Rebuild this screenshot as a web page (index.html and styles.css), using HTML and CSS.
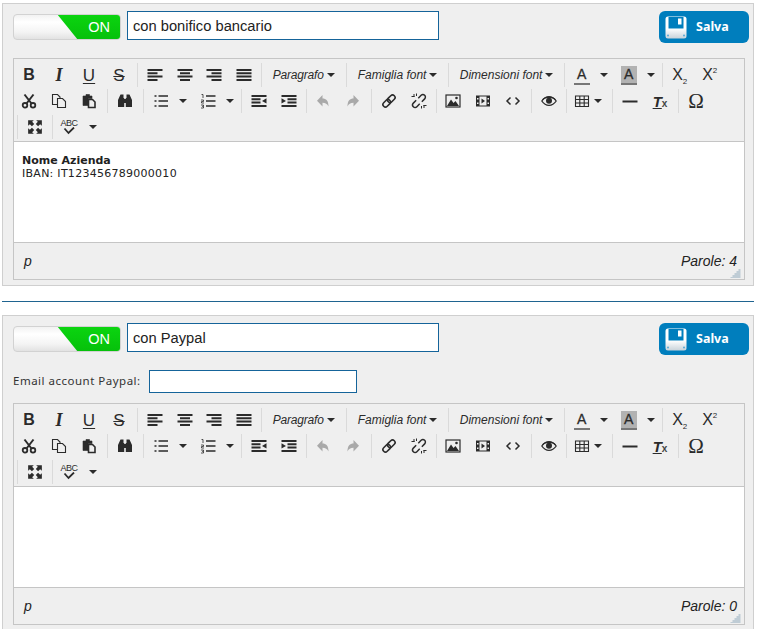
FILE: index.html
```html
<!DOCTYPE html>
<html lang="it">
<head>
<meta charset="utf-8">
<title>Metodi di pagamento</title>
<link rel="stylesheet" href="styles.css">
</head>
<body>
<svg class="defs" aria-hidden="true">
  <defs>
    <linearGradient id="diskfill" x1="0" y1="0" x2="0" y2="1"><stop offset="0" stop-color="#ffffff"/><stop offset=".55" stop-color="#ffffff"/><stop offset="1" stop-color="#c9d3da"/></linearGradient>
    <symbol id="i-left" viewBox="0 0 16 16"><path d="M0.500 3h15M0.500 6.300h10M0.500 9.600h15M0.500 12.900h10" fill="none" stroke="currentColor" stroke-width="2"/></symbol>
    <symbol id="i-center" viewBox="0 0 16 16"><path d="M0.500 3h15M3 6.300h10M0.500 9.600h15M3 12.900h10" fill="none" stroke="currentColor" stroke-width="2"/></symbol>
    <symbol id="i-right" viewBox="0 0 16 16"><path d="M0.500 3h15M5.500 6.300h10M0.500 9.600h15M5.500 12.900h10" fill="none" stroke="currentColor" stroke-width="2"/></symbol>
    <symbol id="i-just" viewBox="0 0 16 16"><path d="M0.500 3h15M0.500 6.300h15M0.500 9.600h15M0.500 12.900h15" fill="none" stroke="currentColor" stroke-width="2"/></symbol>
    <symbol id="i-cut" viewBox="0 0 16 16"><path d="M3.500 1.500L10.500 10.500M12.500 1.500L5.500 10.500" fill="none" stroke="currentColor" stroke-width="2"/><circle cx="4" cy="12.300" r="2.300" fill="none" stroke="currentColor" stroke-width="1.800"/><circle cx="12" cy="12.300" r="2.300" fill="none" stroke="currentColor" stroke-width="1.800"/></symbol>
    <symbol id="i-copy" viewBox="0 0 16 16"><path d="M6 11.500H1.500V1.500H6.500L9 4V6" fill="none" stroke="currentColor" stroke-width="1.100"/><path d="M6.500 5.500H11.500L14.500 8.500V14.500H6.500Z" fill="none" stroke="currentColor" stroke-width="1.100"/></symbol>
    <symbol id="i-paste" viewBox="0 0 16 16"><path d="M5 1.500H8.500V3H11V5.500H7V12.500H2V3H5Z" fill="currentColor" stroke="currentColor" stroke-width=".6"/><path d="M7.500 6.500H11.500L14 9V14.500H7.500Z" fill="#efefef" stroke="currentColor" stroke-width="1.600"/></symbol>
    <symbol id="i-find" viewBox="0 0 16 16"><path d="M3.500 1.500H6.500V5H7.200V14H1V7Z M9.500 1.500H12.500L15 7V14H8.800V5H9.500Z M7.200 6H8.800V10H7.200Z" fill="currentColor"/></symbol>
    <symbol id="i-ul" viewBox="0 0 16 16"><path d="M5.500 3h9.500M5.500 8h9.500M5.500 13h9.500" fill="none" stroke="currentColor" stroke-width="1.600"/><path d="M1.500 2.200h2v1.600h-2zM1.500 7.200h2v1.600h-2zM1.500 12.200h2v1.600h-2z" fill="currentColor"/></symbol>
    <symbol id="i-ol" viewBox="0 0 16 16"><path d="M6 3h9.500M6 8h9.500M6 13h9.500" fill="none" stroke="currentColor" stroke-width="1.600"/><path d="M1.500 1.500h1.500v3.500M1 7h2.500v1.500h-2v1.500h2.500M1 12h2.500v1.300H2M3.500 13.300V15H1" fill="none" stroke="currentColor" stroke-width=".8"/></symbol>
    <symbol id="i-outdent" viewBox="0 0 16 16"><path d="M0.500 3h15M0.500 6.300h9M0.500 9.600h9M0.500 12.900h15" fill="none" stroke="currentColor" stroke-width="2"/><path d="M15.500 5.300V10.600L11 8Z" fill="currentColor"/></symbol>
    <symbol id="i-indent" viewBox="0 0 16 16"><path d="M0.500 3h15M6.500 6.300h9M6.500 9.600h9M0.500 12.900h15" fill="none" stroke="currentColor" stroke-width="2"/><path d="M0.500 5.300V10.600L5 8Z" fill="currentColor"/></symbol>
    <symbol id="i-undo" viewBox="0 0 16 16"><path d="M7.500 2V5.500C11 5.500 13.500 7.500 13.500 13.500C12.300 11 10.500 9.800 7.500 9.800V13.500L2 7.800Z" fill="currentColor"/></symbol>
    <symbol id="i-redo" viewBox="0 0 16 16"><path d="M8.500 2V5.500C5 5.500 2.500 7.500 2.500 13.500C3.700 11 5.500 9.800 8.500 9.800V13.500L14 7.800Z" fill="currentColor"/></symbol>
    <symbol id="i-link" viewBox="0 0 16 16"><g fill="none" stroke="currentColor" stroke-width="1.600" transform="rotate(-45 8 8)"><rect x="0.500" y="5.500" width="8.500" height="5" rx="2.500"/><rect x="7" y="5.500" width="8.500" height="5" rx="2.500"/></g></symbol>
    <symbol id="i-unlink" viewBox="0 0 16 16"><g fill="none" stroke="currentColor" stroke-width="1.500" transform="rotate(-45 8 8)"><path d="M6.500 5.500H2.500A2.500 2.500 0 0 0 2.500 10.500H6.500"/><path d="M9.500 5.500H13.500A2.500 2.500 0 0 1 13.500 10.500H9.500"/></g><path d="M3 1V4M0.500 3.500H3.500M5.500 0.500V3M13 15V12M15.500 12.500H12.500M10.500 15.500V13" fill="none" stroke="currentColor" stroke-width="1"/></symbol>
    <symbol id="i-image" viewBox="0 0 16 16"><rect x="1" y="2" width="14" height="12" fill="none" stroke="currentColor" stroke-width="1.200"/><path d="M2 13L6 6.500L8.500 10L10.500 8L14 13Z" fill="currentColor"/><circle cx="11.500" cy="5" r="1.300" fill="currentColor"/></symbol>
    <symbol id="i-media" viewBox="0 0 16 16"><path d="M1 2.500H15V13.500H1Z" fill="currentColor"/><path d="M4.500 3.500H11.500V12.500H4.500Z" fill="#efefef"/><path d="M6.500 5.500L10 8L6.500 10.500Z" fill="currentColor"/><path d="M2 5h1.500v1.500H2zM2 9.500h1.500v1.500H2zM12.500 5h1.500v1.500h-1.500zM12.500 9.500h1.500v1.500h-1.500z" fill="#efefef"/></symbol>
    <symbol id="i-code" viewBox="0 0 16 16"><path d="M5.500 4.500L2 8L5.500 11.500M10.500 4.500L14 8L10.500 11.500" fill="none" stroke="currentColor" stroke-width="1.500"/></symbol>
    <symbol id="i-eye" viewBox="0 0 16 16"><path d="M0.800 8C3 4.800 5.500 3.600 8 3.600S13 4.800 15.200 8C13 11.200 10.500 12.400 8 12.400S3 11.200 0.800 8Z" fill="none" stroke="currentColor" stroke-width="1.300"/><circle cx="8" cy="7.800" r="3" fill="currentColor"/><path d="M1.500 7C4 3.500 12 3.500 14.500 7" fill="none" stroke="currentColor" stroke-width="1.200"/></symbol>
    <symbol id="i-table" viewBox="0 0 16 16"><path d="M1.500 3H14.500V13.500H1.500ZM1.500 6.500H14.500M1.500 10H14.500M5.800 3V13.500M10.200 3V13.500" fill="none" stroke="currentColor" stroke-width="1.100"/></symbol>
    <symbol id="i-hr" viewBox="0 0 16 16"><path d="M0.500 8.500H15.500" fill="none" stroke="currentColor" stroke-width="2"/></symbol>
    <symbol id="i-full" viewBox="1 1 14 14"><path d="M2 2H7L5.500 3.500L7.300 5.300L5.300 7.300L3.500 5.500L2 7ZM14 2V7L12.500 5.500L10.700 7.300L8.700 5.300L10.500 3.500L9 2ZM2 14V9L3.500 10.500L5.300 8.700L7.300 10.700L5.500 12.500L7 14ZM14 14H9L10.500 12.500L8.700 10.700L10.700 8.700L12.500 10.500L14 9Z" fill="currentColor"/></symbol>
    <symbol id="i-check" viewBox="0 0 16 8"><path d="M3.500 1.500L7.500 6L13 0.500" fill="none" stroke="currentColor" stroke-width="1.800"/></symbol>
    <symbol id="i-disk" viewBox="0 0 22 23"><rect x="0.500" y="0.500" width="21" height="22" rx="2.500" fill="url(#diskfill)"/><path d="M3.500 1H18.500V12.500H3.500Z" fill="#007ebd"/><rect x="13" y="2.500" width="3.500" height="6" fill="#ffffff"/><circle cx="3" cy="19.500" r="1" fill="#5aa9d6"/><circle cx="19" cy="19.500" r="1" fill="#5aa9d6"/></symbol>
    <symbol id="i-grip" viewBox="0 0 11 9"><path d="M8.500 1h2M6.500 3h4M4.500 5h6M2.500 7h8M0.500 9h10" fill="none" stroke="#8fa9bb" stroke-width="1"/></symbol>
  </defs>
</svg>

<section class="panel">
  <div class="head">
    <div class="switch"><span class="switch-on">ON</span></div>
    <input class="field field-title" type="text" value="con bonifico bancario">
    <button class="save" type="button"><svg class="disk"><use href="#i-disk"/></svg><span>Salva</span></button>
  </div>
  <div class="editor">
    <div class="toolbar">
      <div class="row">
        <span class="b glyph g-b">B</span><span class="b glyph g-i">I</span><span class="b glyph g-u">U</span><span class="b glyph g-s">S</span>
        <i class="sep"></i>
        <span class="b b-a"><svg class="ic"><use href="#i-left"/></svg></span><span class="b b-a"><svg class="ic"><use href="#i-center"/></svg></span><span class="b b-a"><svg class="ic"><use href="#i-right"/></svg></span><span class="b b-a"><svg class="ic"><use href="#i-just"/></svg></span>
        <i class="sep sep-tight"></i>
        <span class="menu m-para">Paragrafo<i class="caret"></i></span>
        <i class="sep"></i>
        <span class="menu m-fam">Famiglia font<i class="caret"></i></span>
        <i class="sep"></i>
        <span class="menu m-dim">Dimensioni font<i class="caret"></i></span>
        <i class="sep"></i>
        <span class="b"><span class="colour">A</span></span><span class="cb"><i class="caret"></i></span>
        <span class="b b-gap"><span class="colour colour-bg">A</span></span><span class="cb"><i class="caret"></i></span>
        <i class="sep"></i>
        <span class="b g-script"><span>X<sub>2</sub></span></span><span class="b g-script"><span>X<sup>2</sup></span></span>
      </div>
      <div class="row">
        <span class="b"><svg class="ic"><use href="#i-cut"/></svg></span><span class="b"><svg class="ic"><use href="#i-copy"/></svg></span><span class="b"><svg class="ic"><use href="#i-paste"/></svg></span>
        <i class="sep"></i>
        <span class="b"><svg class="ic"><use href="#i-find"/></svg></span>
        <i class="sep"></i>
        <span class="b"><svg class="ic"><use href="#i-ul"/></svg></span><span class="cb cb-list"><i class="caret"></i></span>
        <span class="b b-gap3"><svg class="ic"><use href="#i-ol"/></svg></span><span class="cb cb-list"><i class="caret"></i></span>
        <i class="sep sep-wide"></i>
        <span class="b"><svg class="ic"><use href="#i-outdent"/></svg></span><span class="b"><svg class="ic"><use href="#i-indent"/></svg></span>
        <i class="sep sep-snug"></i>
        <span class="b off"><svg class="ic"><use href="#i-undo"/></svg></span><span class="b off"><svg class="ic"><use href="#i-redo"/></svg></span>
        <i class="sep"></i>
        <span class="b"><svg class="ic"><use href="#i-link"/></svg></span><span class="b"><svg class="ic"><use href="#i-unlink"/></svg></span>
        <i class="sep sep-snug"></i>
        <span class="b"><svg class="ic"><use href="#i-image"/></svg></span><span class="b"><svg class="ic"><use href="#i-media"/></svg></span><span class="b"><svg class="ic"><use href="#i-code"/></svg></span>
        <i class="sep"></i>
        <span class="b"><svg class="ic"><use href="#i-eye"/></svg></span>
        <i class="sep sep-snug"></i>
        <span class="b b-table"><svg class="ic"><use href="#i-table"/></svg><i class="caret"></i></span>
        <i class="sep"></i>
        <span class="b"><svg class="ic"><use href="#i-hr"/></svg></span><span class="b glyph g-tx"><span class="tx-t">T</span><span class="tx-x">x</span></span>
        <i class="sep"></i>
        <span class="b glyph g-omega">Ω</span>
      </div>
      <div class="row row-last">
        <i class="sep sep-first"></i>
        <span class="b"><svg class="ic"><use href="#i-full"/></svg></span>
        <i class="sep sep-snug"></i>
        <span class="b spell"><span class="spell-abc">ABC</span><svg class="spell-check"><use href="#i-check"/></svg></span><span class="cb cb-spell"><i class="caret"></i></span>
      </div>
    </div>
    <div class="content">
      <p class="content-name">Nome Azienda</p>
      <p class="content-iban">IBAN: IT123456789000010</p>
    </div>
    <div class="status"><span class="path">p</span><span class="count">Parole: 4</span><svg class="grip"><use href="#i-grip"/></svg></div>
  </div>
</section>

<hr class="divider">

<section class="panel">
  <div class="head">
    <div class="switch"><span class="switch-on">ON</span></div>
    <input class="field field-title" type="text" value="con Paypal">
    <button class="save" type="button"><svg class="disk"><use href="#i-disk"/></svg><span>Salva</span></button>
  </div>
  <div class="email-row">
    <label class="email-label" for="paypal">Email account Paypal:</label>
    <input class="field field-email" id="paypal" type="text">
  </div>
  <div class="editor">
    <div class="toolbar">
      <div class="row">
        <span class="b glyph g-b">B</span><span class="b glyph g-i">I</span><span class="b glyph g-u">U</span><span class="b glyph g-s">S</span>
        <i class="sep"></i>
        <span class="b b-a"><svg class="ic"><use href="#i-left"/></svg></span><span class="b b-a"><svg class="ic"><use href="#i-center"/></svg></span><span class="b b-a"><svg class="ic"><use href="#i-right"/></svg></span><span class="b b-a"><svg class="ic"><use href="#i-just"/></svg></span>
        <i class="sep sep-tight"></i>
        <span class="menu m-para">Paragrafo<i class="caret"></i></span>
        <i class="sep"></i>
        <span class="menu m-fam">Famiglia font<i class="caret"></i></span>
        <i class="sep"></i>
        <span class="menu m-dim">Dimensioni font<i class="caret"></i></span>
        <i class="sep"></i>
        <span class="b"><span class="colour">A</span></span><span class="cb"><i class="caret"></i></span>
        <span class="b b-gap"><span class="colour colour-bg">A</span></span><span class="cb"><i class="caret"></i></span>
        <i class="sep"></i>
        <span class="b g-script"><span>X<sub>2</sub></span></span><span class="b g-script"><span>X<sup>2</sup></span></span>
      </div>
      <div class="row">
        <span class="b"><svg class="ic"><use href="#i-cut"/></svg></span><span class="b"><svg class="ic"><use href="#i-copy"/></svg></span><span class="b"><svg class="ic"><use href="#i-paste"/></svg></span>
        <i class="sep"></i>
        <span class="b"><svg class="ic"><use href="#i-find"/></svg></span>
        <i class="sep"></i>
        <span class="b"><svg class="ic"><use href="#i-ul"/></svg></span><span class="cb cb-list"><i class="caret"></i></span>
        <span class="b b-gap3"><svg class="ic"><use href="#i-ol"/></svg></span><span class="cb cb-list"><i class="caret"></i></span>
        <i class="sep sep-wide"></i>
        <span class="b"><svg class="ic"><use href="#i-outdent"/></svg></span><span class="b"><svg class="ic"><use href="#i-indent"/></svg></span>
        <i class="sep sep-snug"></i>
        <span class="b off"><svg class="ic"><use href="#i-undo"/></svg></span><span class="b off"><svg class="ic"><use href="#i-redo"/></svg></span>
        <i class="sep"></i>
        <span class="b"><svg class="ic"><use href="#i-link"/></svg></span><span class="b"><svg class="ic"><use href="#i-unlink"/></svg></span>
        <i class="sep sep-snug"></i>
        <span class="b"><svg class="ic"><use href="#i-image"/></svg></span><span class="b"><svg class="ic"><use href="#i-media"/></svg></span><span class="b"><svg class="ic"><use href="#i-code"/></svg></span>
        <i class="sep"></i>
        <span class="b"><svg class="ic"><use href="#i-eye"/></svg></span>
        <i class="sep sep-snug"></i>
        <span class="b b-table"><svg class="ic"><use href="#i-table"/></svg><i class="caret"></i></span>
        <i class="sep"></i>
        <span class="b"><svg class="ic"><use href="#i-hr"/></svg></span><span class="b glyph g-tx"><span class="tx-t">T</span><span class="tx-x">x</span></span>
        <i class="sep"></i>
        <span class="b glyph g-omega">Ω</span>
      </div>
      <div class="row row-last">
        <i class="sep sep-first"></i>
        <span class="b"><svg class="ic"><use href="#i-full"/></svg></span>
        <i class="sep sep-snug"></i>
        <span class="b spell"><span class="spell-abc">ABC</span><svg class="spell-check"><use href="#i-check"/></svg></span><span class="cb cb-spell"><i class="caret"></i></span>
      </div>
    </div>
    <div class="content"></div>
    <div class="status"><span class="path">p</span><span class="count">Parole: 0</span><svg class="grip"><use href="#i-grip"/></svg></div>
  </div>
</section>
</body>
</html>
```
FILE: styles.css
```css
html { overflow: hidden; }
* { box-sizing: border-box; }
body {
  margin: 0;
  padding: 3px 3px 0 2px;
  background: #fff;
  font-family: "Liberation Sans", Arial, sans-serif;
  color: #222;
}
.defs { display: block; width: 0; height: 0; }

.panel {
  background: #efefef;
  border: 1px solid #cfcfcf;
  padding: 7px 4px 5px 10px;
}
.divider {
  margin: 15px 0 13px;
  border: 0;
  height: 1px;
  background: #1f6490;
}

.head { display: flex; align-items: flex-start; height: 32px; }
.switch {
  width: 108px;
  height: 26px;
  margin-top: 3px;
  border: 1px solid #d2d2d2;
  border-radius: 4px;
  background: linear-gradient(#f2f2f2, #fff 30%, #f4f4f4 70%, #e2e2e2);
  display: flex;
  justify-content: flex-end;
  overflow: hidden;
}
.switch-on {
  width: 64px;
  margin: -1px -1px -1px 0;
  background: linear-gradient(#0bd510, #06c00b);
  clip-path: polygon(0 0, 100% 0, 100% 100%, 21px 100%);
  color: #fff;
  font-size: 14.500px;
  line-height: 27px;
  text-align: right;
  padding-right: 11px;
  border-radius: 0 4px 4px 0;
}
.field {
  border: 1px solid #15649a;
  background: #fff;
  font-family: "Liberation Sans", Arial, sans-serif;
  color: #222;
  outline: 0;
  border-radius: 0;
}
.field-title {
  width: 312px;
  height: 29px;
  margin-left: 6px;
  padding: 0 5px;
  font-size: 14.700px;
}
.save {
  margin-left: auto;
  width: 90px;
  height: 32px;
  border: 0;
  border-radius: 6px;
  background: #007ebd;
  color: #fff;
  display: flex;
  align-items: center;
  padding: 0 0 2px 6px;
  font-family: "Noto Sans", sans-serif;
  font-weight: 700;
  font-size: 12.500px;
}
.disk { width: 22px; height: 23px; margin: 2px 9px 0 0; }

.email-row { display: flex; align-items: center; margin-top: 15px; height: 23px; }
.email-label {
  font-family: "Noto Sans", sans-serif;
  font-size: 11.500px;
  letter-spacing: .5px;
  color: #333;
  width: 136px;
  padding-bottom: 2px;
  white-space: nowrap;
}
.field-email { width: 208px; height: 23px; }
.email-row + .editor { margin-top: 10px; }

.editor {
  margin-top: 15px;
  width: 732px;
  border: 1px solid #c5c5c5;
}
.toolbar { padding-top: 3px; height: 83px; border-bottom: 1px solid #c5c5c5; }
.row { display: flex; align-items: center; height: 26px; color: #2b2b2b; }
.row-last { padding-left: 3px; }

.b {
  flex: none;
  width: 30px;
  height: 24px;
  display: flex;
  align-items: center;
  justify-content: center;
}
.b-a { width: 29.700px; }
.b-gap { margin-left: 2px; }
.b-gap3 { margin-left: 3px; }
.off { color: #a9a9a9; }
.ic { width: 16px; height: 16px; display: block; }

.sep { flex: none; width: 1px; height: 24px; background: #dadada; margin: 0 2px 0 3px; }
.sep-tight { margin-left: 2px; }
.sep-wide { margin-left: 4px; }
.sep-snug { margin: 0 1px 0 2px; }
.sep-first { margin-left: 0; }

.caret {
  display: inline-block;
  width: 0;
  height: 0;
  border-left: 4px solid transparent;
  border-right: 4px solid transparent;
  border-top: 4px solid #2b2b2b;
}
.cb { flex: none; width: 15px; height: 24px; display: flex; align-items: center; justify-content: center; }
.cb-list { width: 14px; }
.cb-spell { width: 14px; margin-left: 2px; }

.menu {
  flex: none;
  height: 24px;
  display: flex;
  align-items: center;
  padding-left: 9px;
  font-size: 12px;
  font-style: italic;
  white-space: nowrap;
}
.menu .caret { margin-left: 3px; }
.m-para { width: 79px; letter-spacing: -.2px; }
.m-fam { width: 96px; }
.m-dim { width: 110px; }

.glyph { font-size: 16px; line-height: 1; }
.g-b { font-weight: 700; }
.g-i { font-family: "Liberation Serif", serif; font-style: italic; font-weight: 700; font-size: 18px; }
.g-u { font-size: 17px; text-decoration: underline; text-decoration-thickness: 1px; text-underline-offset: 2px; }
.g-s { font-size: 17px; text-decoration: line-through; text-decoration-thickness: 1px; }
.g-script { font-size: 16px; line-height: 16px; }
.g-script sub, .g-script sup { font-size: 8px; line-height: 0; }
.g-script sub { vertical-align: -4px; }
.g-script sup { vertical-align: 7px; }
.g-omega { font-family: "Liberation Serif", serif; font-size: 21px; }
.g-tx { align-items: baseline; padding-top: 5px; }
.tx-t { font-family: "Liberation Sans", sans-serif; font-style: italic; font-weight: 700; font-size: 15px; text-decoration: underline; }
.tx-x { font-size: 10px; font-weight: 700; color: #444; }

.colour {
  width: 16px;
  height: 19px;
  font-size: 14px;
  line-height: 16px;
  text-align: center;
  border-bottom: 2px solid #777;
  -webkit-text-stroke: .3px currentColor;
}
.colour-bg { background: #b2b2b2; }

.b-table { width: 41px; justify-content: flex-start; padding-left: 6px; }
.b-table .caret { margin-left: 4px; }

.spell { flex-direction: column; }
.spell-abc { font-size: 9px; line-height: 8px; letter-spacing: -.5px; }
.spell-check { width: 16px; height: 8px; display: block; }

.content {
  height: 101px;
  background: #fff;
  padding: 12px 8px 0;
  border-bottom: 1px solid #c5c5c5;
  font-family: "DejaVu Sans", Verdana, sans-serif;
  font-size: 11px;
  line-height: 13px;
  color: #222;
}
.content p { margin: 0; }
.content .content-name { font-weight: 700; }
.content .content-iban { letter-spacing: .27px; }

.status {
  position: relative;
  height: 36px;
  display: flex;
  align-items: center;
  justify-content: space-between;
  padding: 0 7px 0 10px;
  font-size: 14px;
  font-style: italic;
  color: #222;
}
.grip { position: absolute; right: 3px; bottom: 1px; width: 11px; height: 9px; }
```
